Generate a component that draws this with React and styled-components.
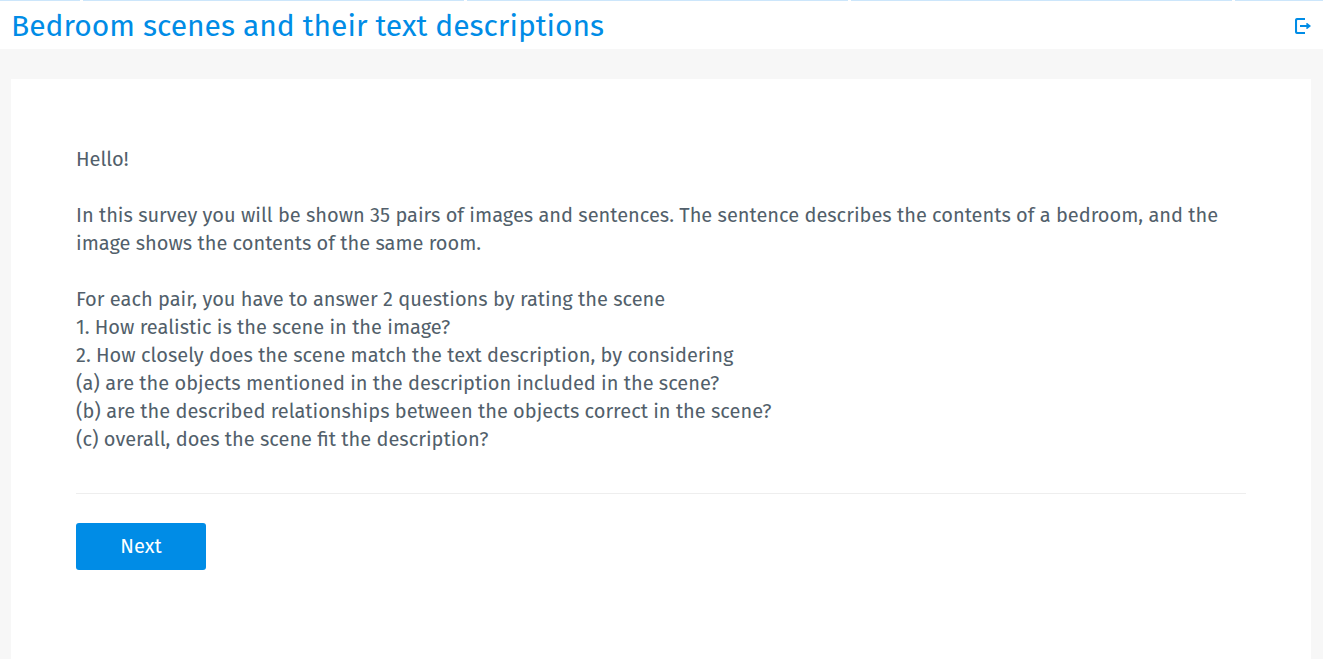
import React from "react";
import styled, { createGlobalStyle } from "styled-components";

const GlobalStyle = createGlobalStyle`
  *, *::before, *::after { box-sizing: border-box; }
  html, body, #root { min-height: 100%; }
  body {
    margin: 0;
    background: #f7f7f7;
    color: #525f6b;
    font-family: "Fira Sans", "Noto Sans", sans-serif;
    font-size: 20px;
    line-height: 28px;
  }
`;

const Page = styled.div`
  min-height: 100vh;
  display: flex;
  flex-direction: column;
`;

const ProgressStrip = styled.div`
  height: 1px;
  background: repeating-linear-gradient(to right, #cce6fb 0 381px, #ffffff 381px 384px) -301px 0 / calc(100% + 301px) 100% no-repeat;
`;

const Header = styled.header`
  display: flex;
  align-items: center;
  justify-content: space-between;
  height: 48px;
  padding: 2px 12px 0 11px;
  background: #ffffff;
`;

const Title = styled.h1`
  margin: 0;
  color: #008ce6;
  font-size: 30px;
  font-weight: 400;
  line-height: 40px;
`;

const ExitLink = styled.a`
  display: flex;
  color: #008ce6;
`;

const Card = styled.main`
  flex: 1;
  margin: 30px 12px 0 11px;
  padding: 66px 65px 80px;
  background: #ffffff;
`;

const Paragraph = styled.p`
  margin: 0 0 28px;
`;

const Actions = styled.div`
  margin-top: 40px;
  padding-top: 29px;
  border-top: 1px solid #eeeeee;
`;

const NextButton = styled.button`
  width: 130px;
  height: 47px;
  padding: 0 0 2px;
  border: 0;
  border-radius: 3px;
  background: #008ce6;
  color: #ffffff;
  font: inherit;
  cursor: pointer;
`;

function ExitIcon() {
  return (
    <svg width="16" height="16" viewBox="0 0 16 16" fill="none" aria-hidden="true">
      <path d="M10 1H2.5Q1 1 1 2.5V13.5Q1 15 2.5 15H10" stroke="currentColor" strokeWidth="2.1" />
      <path d="M5 8H13" stroke="currentColor" strokeWidth="2" />
      <path d="M11.4 5H12.2L16 8L12.2 11H11.4Z" fill="currentColor" />
    </svg>
  );
}

const instructions = [
  "For each pair, you have to answer 2 questions by rating the scene",
  "1. How realistic is the scene in the image?",
  "2. How closely does the scene match the text description, by considering",
  "(a) are the objects mentioned in the description included in the scene?",
  "(b) are the described relationships between the objects correct in the scene?",
  "(c) overall, does the scene fit the description?",
];

export default function App() {
  return (
    <Page>
      <GlobalStyle />
      <ProgressStrip />
      <Header>
        <Title>Bedroom scenes and their text descriptions</Title>
        <ExitLink href="#exit" aria-label="Exit survey">
          <ExitIcon />
        </ExitLink>
      </Header>
      <Card>
        <Paragraph>Hello!</Paragraph>
        <Paragraph>
          In this survey you will be shown 35 pairs of images and sentences. The sentence describes the
          contents of a bedroom, and the image shows the contents of the same room.
        </Paragraph>
        <Paragraph>
          {instructions.map((line, index) => (
            <React.Fragment key={line}>
              {index > 0 && <br />}
              {line}
            </React.Fragment>
          ))}
        </Paragraph>
        <Actions>
          <NextButton type="button">Next</NextButton>
        </Actions>
      </Card>
    </Page>
  );
}
